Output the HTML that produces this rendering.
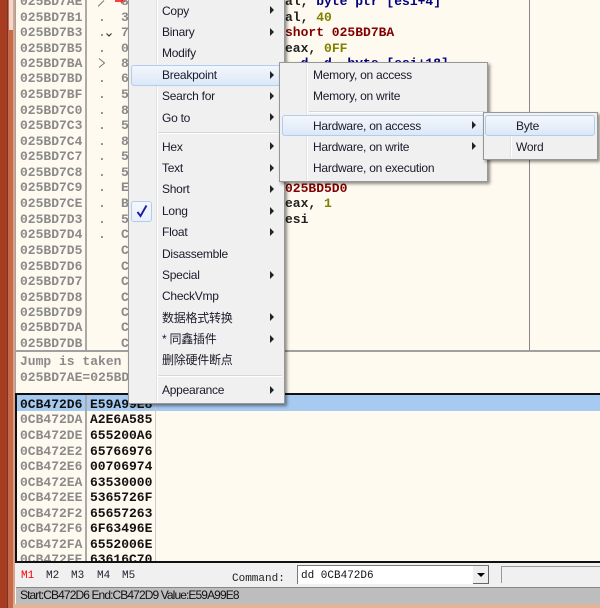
<!DOCTYPE html>
<html><head><meta charset="utf-8"><style>
html,body{margin:0;padding:0}
body{width:600px;height:608px;position:relative;overflow:hidden;background:#fffaf0}
div,span{position:absolute;white-space:pre}
.m{font:bold 13px/16px "Liberation Mono",monospace;margin-top:1px;filter:blur(.3px)}
.g{color:#8a8a8a}
.k{color:#111}
.n{color:#222}
.b{color:#000080}
.r{color:#800000}
.o{color:#808000}
.i{font:12px/16px "Liberation Sans","Noto Sans CJK SC",sans-serif;color:#1a1a2a;letter-spacing:-.25px}
.a{width:0;height:0;border-left:4px solid #222;border-top:4px solid transparent;border-bottom:4px solid transparent}
.hl{background:linear-gradient(#f3f7fc,#dce8f7);border:1px solid #aecdf0;border-radius:3px;box-sizing:border-box}
.menu{background:#f0f0f0;border:1px solid #979797;box-sizing:border-box;box-shadow:2px 2px 3px rgba(0,0,0,.45)}
.sep{height:1px;background:#d7d7d7;border-bottom:1px solid #fff}
.v{width:1px;background:#e2e2e2;border-right:1px solid #fff}
.t{font:11px/14px "Liberation Mono",monospace;margin-top:1px}
</style></head><body>
<!-- window frame -->
<div style="left:0;top:0;width:7px;height:608px;background:#a83c20"></div>
<div style="left:7px;top:0;width:1px;height:608px;background:#6d3a2a"></div>
<div style="left:8px;top:0;width:5px;height:608px;background:#c9694a"></div>
<div style="left:9px;top:0;width:4px;height:30px;background:#f0d8cc"></div>
<div style="left:13px;top:0;width:2px;height:608px;background:#d8a48c"></div>
<div style="left:15px;top:0;width:1px;height:394px;background:#a0a0a0"></div>

<!-- disasm lines -->
<div style="left:85px;top:0;width:2px;height:350px;background:#aaa"></div>
<div style="left:529px;top:0;width:1px;height:350px;background:#888"></div>
<div style="left:16px;top:350px;width:584px;height:2px;background:#a0a0a0"></div>

<div class="m g" style="left:20px;top:-7px">025BD7AE</div>
<div class="m g" style="left:20px;top:9px">025BD7B1</div>
<div class="m g" style="left:20px;top:24px">025BD7B3</div>
<div class="m g" style="left:20px;top:40px">025BD7B5</div>
<div class="m g" style="left:20px;top:55px">025BD7BA</div>
<div class="m g" style="left:20px;top:70px">025BD7BD</div>
<div class="m g" style="left:20px;top:86px">025BD7BF</div>
<div class="m g" style="left:20px;top:102px">025BD7C0</div>
<div class="m g" style="left:20px;top:117px">025BD7C3</div>
<div class="m g" style="left:20px;top:133px">025BD7C4</div>
<div class="m g" style="left:20px;top:148px">025BD7C7</div>
<div class="m g" style="left:20px;top:164px">025BD7C8</div>
<div class="m g" style="left:20px;top:179px">025BD7C9</div>
<div class="m g" style="left:20px;top:195px">025BD7CE</div>
<div class="m g" style="left:20px;top:211px">025BD7D3</div>
<div class="m g" style="left:20px;top:226px">025BD7D4</div>
<div class="m g" style="left:20px;top:242px">025BD7D5</div>
<div class="m g" style="left:20px;top:258px">025BD7D6</div>
<div class="m g" style="left:20px;top:273px">025BD7D7</div>
<div class="m g" style="left:20px;top:289px">025BD7D8</div>
<div class="m g" style="left:20px;top:304px">025BD7D9</div>
<div class="m g" style="left:20px;top:319px">025BD7DA</div>
<div class="m g" style="left:20px;top:335px">025BD7DB</div>

<!-- markers -->
<svg style="position:absolute;left:98px;top:0" width="8" height="8"><path d="M0 6.5 6 .5" fill="none" stroke="#777"/></svg>
<svg style="position:absolute;left:98px;top:58px" width="8" height="10"><path d="M1 .5 6.5 5 1 9.5" fill="none" stroke="#777"/></svg>
<div class="m g" style="left:98px;top:9px">.</div>
<div class="m g" style="left:98px;top:24px">.</div>
<div class="m g" style="left:98px;top:40px">.</div>
<div class="m g" style="left:98px;top:70px">.</div>
<div class="m g" style="left:98px;top:86px">.</div>
<div class="m g" style="left:98px;top:102px">.</div>
<div class="m g" style="left:98px;top:117px">.</div>
<div class="m g" style="left:98px;top:133px">.</div>
<div class="m g" style="left:98px;top:148px">.</div>
<div class="m g" style="left:98px;top:164px">.</div>
<div class="m g" style="left:98px;top:179px">.</div>
<div class="m g" style="left:98px;top:195px">.</div>
<div class="m g" style="left:98px;top:211px">.</div>
<div class="m g" style="left:98px;top:226px">.</div>
<svg style="position:absolute;left:106px;top:33px" width="6" height="4"><path d="M.5.5 3 3 5.5.5" fill="none" stroke="#222"/></svg>
<svg style="position:absolute;left:115px;top:0" width="13" height="5"><path d="M0 1h8M6-1l4 2-4 2" fill="none" stroke="#f00" stroke-width="1.4"/></svg>
<!-- hex first chars -->
<div class="m g" style="left:121px;top:-7px">8</div>
<div class="m g" style="left:121px;top:9px">3</div>
<div class="m g" style="left:121px;top:24px">7</div>
<div class="m g" style="left:121px;top:40px">0</div>
<div class="m g" style="left:121px;top:55px">8</div>
<div class="m g" style="left:121px;top:70px">6</div>
<div class="m g" style="left:121px;top:86px">5</div>
<div class="m g" style="left:121px;top:102px">8</div>
<div class="m g" style="left:121px;top:117px">5</div>
<div class="m g" style="left:121px;top:133px">8</div>
<div class="m g" style="left:121px;top:148px">5</div>
<div class="m g" style="left:121px;top:164px">5</div>
<div class="m g" style="left:121px;top:179px">E</div>
<div class="m g" style="left:121px;top:195px">B</div>
<div class="m g" style="left:121px;top:211px">5</div>
<div class="m g" style="left:121px;top:226px">C</div>
<div class="m g" style="left:121px;top:242px">C</div>
<div class="m g" style="left:121px;top:258px">C</div>
<div class="m g" style="left:121px;top:273px">C</div>
<div class="m g" style="left:121px;top:289px">C</div>
<div class="m g" style="left:121px;top:304px">C</div>
<div class="m g" style="left:121px;top:319px">C</div>
<div class="m g" style="left:121px;top:335px">C</div>

<!-- code -->
<div class="m n" style="left:285px;top:-7px">al, <span class="b" style="position:static">byte ptr [esi+4]</span></div>
<div class="m n" style="left:285px;top:9px">al, <span class="o" style="position:static">40</span></div>
<div class="m r" style="left:285px;top:24px">short 025BD7BA</div>
<div class="m n" style="left:285px;top:40px">eax, <span class="o" style="position:static">0FF</span></div>
<div class="m b" style="left:285px;top:55px">  d  d  byte [esi+18]</div>
<div class="m r" style="left:285px;top:180px">025BD5D0</div>
<div class="m n" style="left:285px;top:195px">eax, <span class="o" style="position:static">1</span></div>
<div class="m n" style="left:285px;top:211px">esi</div>

<!-- info -->
<div class="m g" style="left:20px;top:353px">Jump is taken</div>
<div class="m g" style="left:20px;top:369px">025BD7AE=025BD</div>

<!-- dump -->
<div style="left:15px;top:393px;width:585px;height:2px;background:#111"></div>
<div style="left:15px;top:393px;width:2px;height:170px;background:#111"></div>
<div style="left:17px;top:395px;width:583px;height:16px;background:#a6caf0"></div>
<div style="left:85px;top:395px;width:2px;height:167px;background:#aaa"></div>
<div style="left:155px;top:395px;width:1px;height:167px;background:#ccc"></div>
<div class="m k" style="left:20px;top:396px">0CB472D6</div>
<div class="m k" style="left:90px;top:396px">E59A99E8</div>
<div class="m g" style="left:20px;top:411px">0CB472DA</div>
<div class="m k" style="left:90px;top:411px">A2E6A585</div>
<div class="m g" style="left:20px;top:427px">0CB472DE</div>
<div class="m k" style="left:90px;top:427px">655200A6</div>
<div class="m g" style="left:20px;top:443px">0CB472E2</div>
<div class="m k" style="left:90px;top:443px">65766976</div>
<div class="m g" style="left:20px;top:458px">0CB472E6</div>
<div class="m k" style="left:90px;top:458px">00706974</div>
<div class="m g" style="left:20px;top:474px">0CB472EA</div>
<div class="m k" style="left:90px;top:474px">63530000</div>
<div class="m g" style="left:20px;top:489px">0CB472EE</div>
<div class="m k" style="left:90px;top:489px">5365726F</div>
<div class="m g" style="left:20px;top:505px">0CB472F2</div>
<div class="m k" style="left:90px;top:505px">65657263</div>
<div class="m g" style="left:20px;top:520px">0CB472F6</div>
<div class="m k" style="left:90px;top:520px">6F63496E</div>
<div class="m g" style="left:20px;top:536px">0CB472FA</div>
<div class="m k" style="left:90px;top:536px">6552006E</div>
<div class="m g" style="left:20px;top:551px">0CB472FE</div>
<div class="m k" style="left:90px;top:551px">63616C70</div>

<!-- bottom -->
<div style="left:15px;top:561px;width:585px;height:2px;background:#111"></div>
<div style="left:15px;top:563px;width:585px;height:24px;background:#f0f0f0"></div>
<div class="t" style="left:21px;top:568px;color:#f00">M1</div>
<div class="t" style="left:46px;top:568px;color:#223">M2</div>
<div class="t" style="left:71px;top:568px;color:#223">M3</div>
<div class="t" style="left:97px;top:568px;color:#223">M4</div>
<div class="t" style="left:122px;top:568px;color:#223">M5</div>
<div class="t" style="left:232px;top:571px;color:#222">Command:</div>
<div style="left:297px;top:565px;width:192px;height:19px;background:#fff;border-left:1px solid #777;border-top:1px solid #777;box-sizing:border-box"></div>
<div class="t" style="left:301px;top:568px;color:#111">dd 0CB472D6</div>
<div style="left:473px;top:566px;width:16px;height:18px;background:#eee;border-right:1px solid #666;border-bottom:1px solid #666;box-sizing:border-box"></div>
<div style="left:477px;top:573px;width:0;height:0;border-top:4px solid #000;border-left:4px solid transparent;border-right:4px solid transparent"></div>
<div style="left:501px;top:566px;width:99px;height:17px;background:#f0f0f0;border-left:1px solid #999;border-top:1px solid #999;box-sizing:border-box"></div>
<div style="left:16px;top:587px;width:584px;height:17px;background:#bdbdbd;border-top:1px solid #888;box-sizing:border-box"></div>
<div style="left:20px;top:587px;font:12px/17px 'Liberation Sans',sans-serif;color:#111;letter-spacing:-.9px">Start:CB472D6 End:CB472D9 Value:E59A99E8</div>
<div style="left:13px;top:604px;width:587px;height:4px;background:#e2b498"></div>

<!-- main menu -->
<div class="menu" style="left:128px;top:-2px;width:157px;height:406px"></div>
<div class="v" style="left:156px;top:0;height:402px"></div>
<div class="sep" style="left:158px;top:132px;width:124px"></div>
<div class="sep" style="left:158px;top:375px;width:124px"></div>
<div class="hl" style="left:131px;top:65px;width:150px;height:21px"></div>
<div class="hl" style="left:131px;top:201px;width:21px;height:21px;background:linear-gradient(#f5f8fd,#e8f0fa)"></div>
<svg style="position:absolute;left:136px;top:204px" width="12" height="14"><path d="M1.5 8 4.5 12 10.5 1.5" fill="none" stroke="#1c1ca8" stroke-width="1.9"/></svg>
<div class="i" style="left:162px;top:3px">Copy</div><div class="a" style="left:270px;top:6px"></div>
<div class="i" style="left:162px;top:24px">Binary</div><div class="a" style="left:270px;top:28px"></div>
<div class="i" style="left:162px;top:45px">Modify</div>
<div class="i" style="left:162px;top:67px">Breakpoint</div><div class="a" style="left:270px;top:71px"></div>
<div class="i" style="left:162px;top:88px">Search for</div><div class="a" style="left:270px;top:92px"></div>
<div class="i" style="left:162px;top:110px">Go to</div><div class="a" style="left:270px;top:113px"></div>
<div class="i" style="left:162px;top:139px">Hex</div><div class="a" style="left:270px;top:142px"></div>
<div class="i" style="left:162px;top:160px">Text</div><div class="a" style="left:270px;top:164px"></div>
<div class="i" style="left:162px;top:181px">Short</div><div class="a" style="left:270px;top:185px"></div>
<div class="i" style="left:162px;top:203px">Long</div><div class="a" style="left:270px;top:207px"></div>
<div class="i" style="left:162px;top:224px">Float</div><div class="a" style="left:270px;top:228px"></div>
<div class="i" style="left:162px;top:246px">Disassemble</div>
<div class="i" style="left:162px;top:267px">Special</div><div class="a" style="left:270px;top:271px"></div>
<div class="i" style="left:162px;top:288px">CheckVmp</div>
<div class="i" style="left:162px;top:310px">数据格式转换</div><div class="a" style="left:270px;top:313px"></div>
<div class="i" style="left:162px;top:331px">* 同鑫插件</div><div class="a" style="left:270px;top:335px"></div>
<div class="i" style="left:162px;top:352px">删除硬件断点</div>
<div class="i" style="left:162px;top:382px">Appearance</div><div class="a" style="left:270px;top:386px"></div>

<!-- submenu 2 -->
<div class="menu" style="left:279px;top:62px;width:209px;height:120px"></div>
<div class="v" style="left:306px;top:64px;height:116px"></div>
<div class="sep" style="left:309px;top:111px;width:176px"></div>
<div class="hl" style="left:282px;top:115px;width:204px;height:21px"></div>
<div class="i" style="left:313px;top:67px">Memory, on access</div>
<div class="i" style="left:313px;top:88px">Memory, on write</div>
<div class="i" style="left:313px;top:118px">Hardware, on access</div><div class="a" style="left:472px;top:121px"></div>
<div class="i" style="left:313px;top:139px">Hardware, on write</div><div class="a" style="left:472px;top:142px"></div>
<div class="i" style="left:313px;top:160px">Hardware, on execution</div>

<!-- submenu 3 -->
<div class="menu" style="left:483px;top:112px;width:115px;height:48px"></div>
<div class="v" style="left:510px;top:114px;height:44px"></div>
<div class="hl" style="left:485px;top:115px;width:110px;height:21px"></div>
<div class="i" style="left:516px;top:118px">Byte</div>
<div class="i" style="left:516px;top:139px">Word</div>
</body></html>
